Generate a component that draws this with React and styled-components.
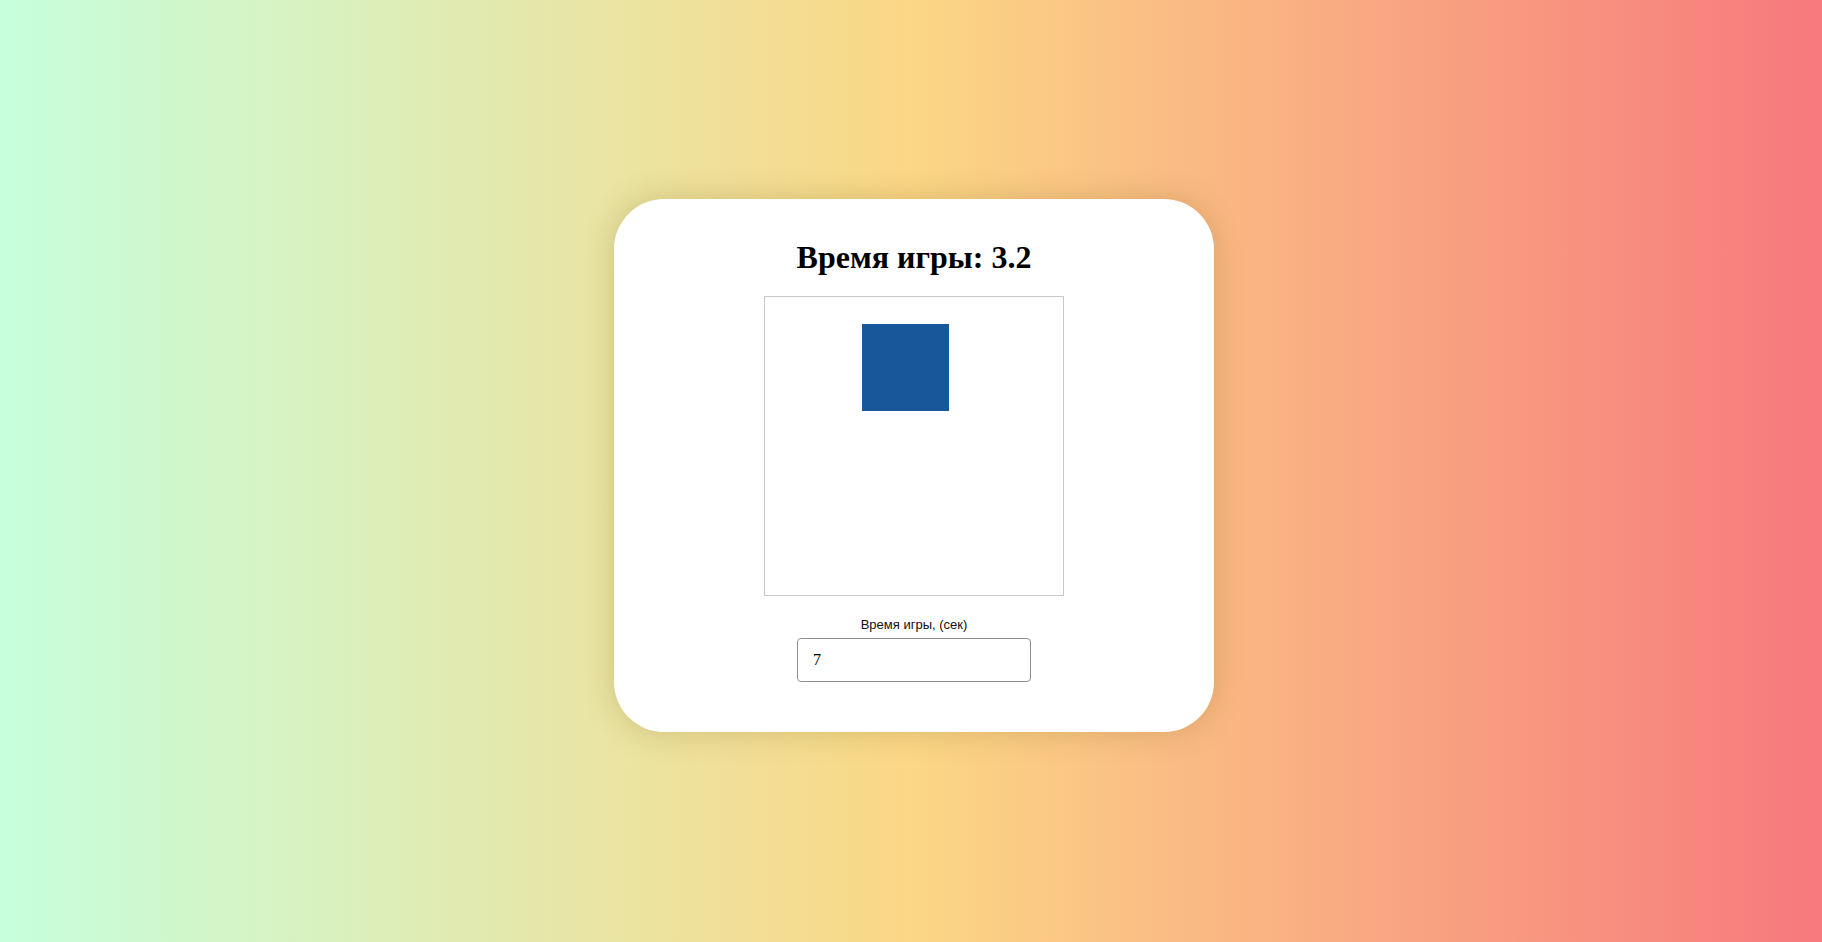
import React, { useState } from "react"
import styled, { createGlobalStyle } from "styled-components"

const GlobalStyle = createGlobalStyle`
  html, body {
    margin: 0;
    padding: 0;
  }

  body {
    font-family: "Liberation Serif", "Times New Roman", serif;
  }
`

const Page = styled.div`
  min-height: 100vh;
  box-sizing: border-box;
  display: flex;
  align-items: center;
  justify-content: center;
  padding: 0 0 11px 6px;
  background: linear-gradient(to right, #c6ffdd, #fbd786, #f7797d);
`

const Card = styled.div`
  width: 600px;
  box-sizing: border-box;
  display: flex;
  flex-direction: column;
  align-items: center;
  padding: 40px 0 50px;
  background-color: #fff;
  border-radius: 50px;
  box-shadow: 0 0 30px rgba(120, 90, 20, 0.25);
`

const Title = styled.h1`
  margin: 0 0 20px;
  font-size: 32px;
  font-weight: 700;
  line-height: normal;
  color: #000;
`

const Field = styled.div`
  width: 300px;
  height: 300px;
  box-sizing: border-box;
  position: relative;
  border: 1px solid #c8c8c8;
`

const Target = styled.div`
  position: absolute;
  width: 87px;
  height: 87px;
  background-color: #17579a;
`

const Label = styled.label`
  margin-top: 21px;
  font-family: "Liberation Sans", Arial, sans-serif;
  font-size: 13px;
  line-height: 15px;
  color: #111;
`

const TimeInput = styled.input`
  margin-top: 6px;
  width: 234px;
  height: 44px;
  box-sizing: border-box;
  padding: 0 15px;
  font-family: "Liberation Serif", "Times New Roman", serif;
  font-size: 16px;
  color: #000;
  border: 1px solid #8f8f8f;
  border-radius: 4px;
  outline: none;
`

export default function App() {
  const [seconds, setSeconds] = useState("7")
  const target = { x: 97, y: 27 }

  return (
    <>
      <GlobalStyle />
      <Page>
        <Card>
          <Title>Время игры: 3.2</Title>
          <Field>
            <Target style={{ left: target.x, top: target.y }} />
          </Field>
          <Label htmlFor="game-time">Время игры, (сек)</Label>
          <TimeInput
            id="game-time"
            type="text"
            value={seconds}
            onChange={(e) => setSeconds(e.target.value)}
          />
        </Card>
      </Page>
    </>
  )
}
